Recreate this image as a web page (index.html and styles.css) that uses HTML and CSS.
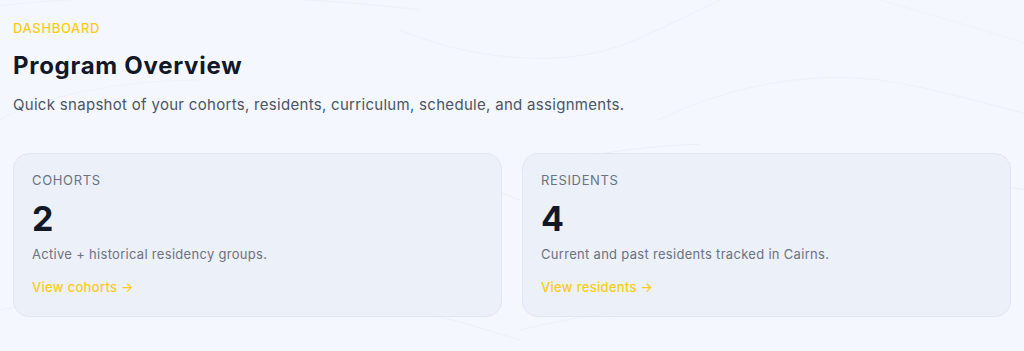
FILE: index.html
```html
<!DOCTYPE html>
<html lang="en">
<head>
<meta charset="utf-8">
<title>Program Overview</title>
<link rel="stylesheet" href="styles.css">
</head>
<body>
<div class="bg-waves" aria-hidden="true">
  <svg width="1024" height="351" viewBox="0 0 1024 351" fill="none">
    <path d="M-20 8 C 120 -10, 300 -5, 420 10" stroke="#eef1f9" stroke-width="1.2"/>
    <path d="M400 30 C 460 55, 560 75, 640 38 C 680 20, 700 10, 730 -5" stroke="#eef1f9" stroke-width="1.2"/>
    <path d="M658 120 C 720 90, 800 70, 880 80 C 920 86, 960 96, 1030 115" stroke="#eef1f9" stroke-width="1.2"/>
    <path d="M-10 125 C 40 95, 120 80, 200 80" stroke="#eff2f9" stroke-width="1.2"/>
    <path d="M880 0 C 950 20, 1000 35, 1030 45" stroke="#f0f3fa" stroke-width="1.2"/>
    <path d="M410 165 C 450 170, 480 185, 520 200" stroke="#eceff7" stroke-width="1"/>
    <path d="M520 170 C 600 150, 660 146, 700 144" stroke="#eceff7" stroke-width="1"/>
    <path d="M960 180 C 990 185, 1010 188, 1030 190" stroke="#eceff7" stroke-width="1"/>
    <path d="M410 310 C 450 318, 480 328, 520 340" stroke="#eef1f8" stroke-width="1"/>
    <path d="M520 330 C 560 320, 590 316, 620 312" stroke="#eef1f8" stroke-width="1"/>
    <path d="M0 310 C 20 306, 40 302, 60 300" stroke="#eef1f8" stroke-width="1"/>
  </svg>
</div>
<main class="page">
  <header class="head">
    <p class="eyebrow">DASHBOARD</p>
    <h1 class="title">Program Overview</h1>
    <p class="lead">Quick snapshot of your cohorts, residents, curriculum, schedule, and assignments.</p>
  </header>
  <section class="cards">
    <article class="card">
      <p class="card-label">COHORTS</p>
      <p class="card-value">2</p>
      <p class="card-desc">Active + historical residency groups.</p>
      <a class="card-link" href="#">View cohorts →</a>
    </article>
    <article class="card">
      <p class="card-label">RESIDENTS</p>
      <p class="card-value">4</p>
      <p class="card-desc">Current and past residents tracked in Cairns.</p>
      <a class="card-link" href="#">View residents →</a>
    </article>
  </section>
</main>
</body>
</html>
```

FILE: styles.css
```css
* { box-sizing: border-box; }

html, body {
  margin: 0;
  padding: 0;
}

body {
  background: #f4f7fe;
  font-family: Inter, "Noto Sans", "Liberation Sans", sans-serif;
  color: #111827;
  width: 1024px;
  height: 351px;
  overflow: hidden;
  position: relative;
}

.bg-waves {
  position: absolute;
  inset: 0;
  pointer-events: none;
}

.bg-waves svg { display: block; }

.page {
  position: relative;
  padding: 20px 13px 0 13px;
}

.head {
  display: flex;
  flex-direction: column;
}

.eyebrow {
  margin: 0;
  font-size: 13px;
  line-height: 16px;
  font-weight: 500;
  letter-spacing: 0.05em;
  color: #facc15;
}

.title {
  margin: 14px 0 0 0;
  font-size: 24px;
  line-height: 32px;
  font-weight: 700;
  letter-spacing: 0.03em;
  color: #111827;
}

.lead {
  margin: 12px 0 0 0;
  font-size: 15px;
  line-height: 22px;
  letter-spacing: 0.3px;
  color: #4b5563;
}

.cards {
  margin-top: 37px;
  display: grid;
  grid-template-columns: 1fr 1fr;
  gap: 20px;
}

.card {
  background: rgba(234, 239, 248, 0.85);
  border: 1px solid #e1e6f0;
  border-radius: 16px;
  padding: 18px 18px 20px 18px;
  height: 164px;
  display: flex;
  flex-direction: column;
}

.card-label {
  margin: 0;
  font-size: 13px;
  line-height: 16px;
  letter-spacing: 0.05em;
  color: #6b7280;
}

.card-value {
  margin: 11px 0 0 0;
  font-size: 34px;
  line-height: 40px;
  font-weight: 700;
  color: #111827;
}

.card-desc {
  margin: 5px 0 0 0;
  font-size: 13px;
  line-height: 20px;
  letter-spacing: 0.3px;
  color: #6b7280;
}

.card-link {
  margin-top: 13px;
  font-size: 13px;
  line-height: 20px;
  font-weight: 500;
  letter-spacing: 0.3px;
  color: #facc15;
  text-decoration: none;
  align-self: flex-start;
}
```
